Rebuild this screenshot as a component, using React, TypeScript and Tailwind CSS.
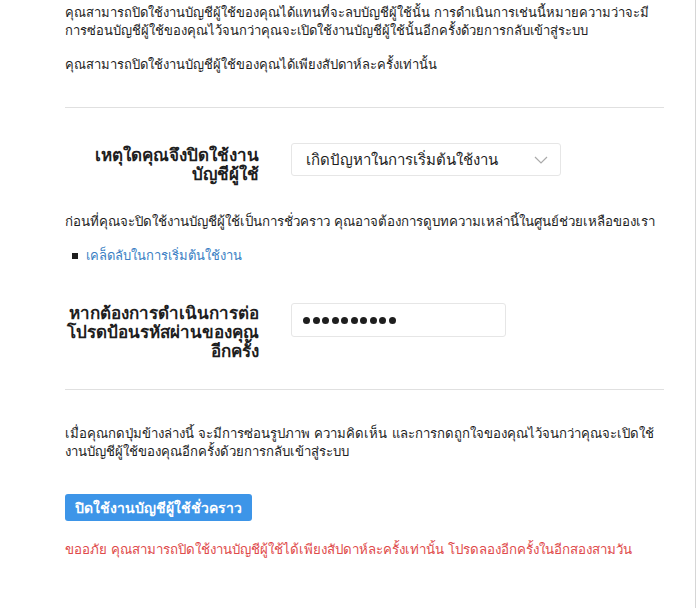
const dots = Array.from({ length: 10 });

export default function App() {
  return (
    <div className="w-[696px] min-h-[608px] bg-white border-r border-[#d6d6d6] text-[#1e1e1e] font-['Tahoma','DejaVu_Sans','Noto_Sans',sans-serif] text-[13px] leading-[18px]">
      <div className="pl-[65px] pr-[31px]">
        <div className="pt-[4px]">
          <p>
            คุณสามารถปิดใช้งานบัญชีผู้ใช้ของคุณได้แทนที่จะลบบัญชีผู้ใช้นั้น การดำเนินการเช่นนี้หมายความว่าจะมีการซ่อนบัญชีผู้ใช้ของคุณไว้จนกว่าคุณจะเปิดใช้งานบัญชีผู้ใช้นั้นอีกครั้งด้วยการกลับเข้าสู่ระบบ
          </p>
          <p className="mt-[16px]">คุณสามารถปิดใช้งานบัญชีผู้ใช้ของคุณได้เพียงสัปดาห์ละครั้งเท่านั้น</p>
        </div>

        <div className="mt-[33px] border-t border-[#e0e0e0]" />

        <div className="mt-[35px] flex items-start">
          <label className="w-[194px] text-right font-bold text-[17px] leading-[19px] pt-[3px]">
            เหตุใดคุณจึงปิดใช้งาน
            <br />
            บัญชีผู้ใช้
          </label>
          <div className="ml-[32px] w-[270px] h-[33px] border border-[#e6e6e6] rounded-[3px] flex items-center justify-between pl-[14px] pr-[12px] text-[15px]">
            <span>เกิดปัญหาในการเริ่มต้นใช้งาน</span>
            <svg width="14" height="8" viewBox="0 0 14 8" fill="none" stroke="#aaa" strokeWidth="1.2">
              <path d="M1 1l6 6 6-6" />
            </svg>
          </div>
        </div>

        <p className="mt-[29px] text-[13.3px]">
          ก่อนที่คุณจะปิดใช้งานบัญชีผู้ใช้เป็นการชั่วคราว คุณอาจต้องการดูบทความเหล่านี้ในศูนย์ช่วยเหลือของเรา
        </p>

        <ul className="mt-[16px] pl-[7px]">
          <li className="flex items-center gap-[8px]">
            <span className="w-[6px] h-[6px] bg-[#1e1e1e]" />
            <a className="text-[#3b7fc4]">เคล็ดลับในการเริ่มต้นใช้งาน</a>
          </li>
        </ul>

        <div className="mt-[38px] flex items-start">
          <label className="w-[194px] text-right font-bold text-[17px] leading-[19px] pt-[1px]">
            หากต้องการดำเนินการต่อ
            <br />
            โปรดป้อนรหัสผ่านของคุณ
            <br />
            อีกครั้ง
          </label>
          <div className="ml-[32px] w-[215px] h-[34px] border border-[#e6e6e6] rounded-[3px] flex items-center gap-[2.5px] pl-[11px]">
            {dots.map((_, i) => (
              <span key={i} className="w-[7px] h-[7px] rounded-full bg-[#1e1e1e]" />
            ))}
          </div>
        </div>

        <div className="mt-[28px] border-t border-[#e0e0e0]" />

        <p className="mt-[35px] text-[13.2px]">
          เมื่อคุณกดปุ่มข้างล่างนี้ จะมีการซ่อนรูปภาพ ความคิดเห็น และการกดถูกใจของคุณไว้จนกว่าคุณจะเปิดใช้งานบัญชีผู้ใช้ของคุณอีกครั้งด้วยการกลับเข้าสู่ระบบ
        </p>

        <button className="mt-[33px] h-[27px] px-[10px] rounded-[3px] bg-[#3d95e8] text-white font-bold text-[14px]">
          ปิดใช้งานบัญชีผู้ใช้ชั่วคราว
        </button>

        <p className="mt-[20px] text-[13.3px] text-[#e04a4a]">
          ขออภัย คุณสามารถปิดใช้งานบัญชีผู้ใช้ได้เพียงสัปดาห์ละครั้งเท่านั้น โปรดลองอีกครั้งในอีกสองสามวัน
        </p>
      </div>
    </div>
  );
}
